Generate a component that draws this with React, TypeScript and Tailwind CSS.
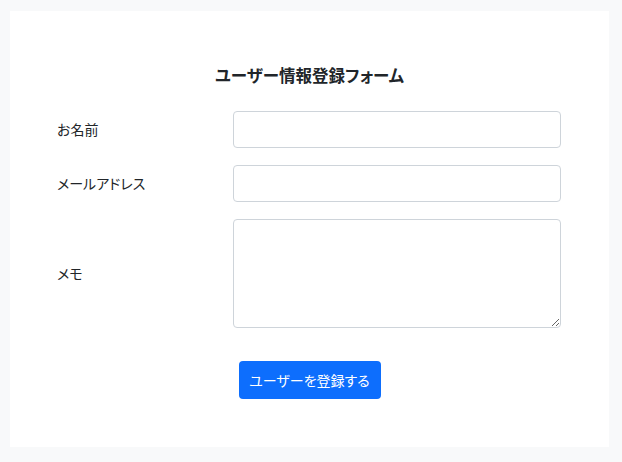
import { useState } from 'react'

const fields = [
  { id: 'name', label: 'お名前', type: 'text' },
  { id: 'email', label: 'メールアドレス', type: 'email' },
]

export default function App() {
  const [form, setForm] = useState({ name: '', email: '', memo: '' })

  return (
    <div
      className="min-h-[462px] w-full bg-[#f8f9fa] pt-[11px] pl-[10px] text-[#212529] [font-family:'Noto_Sans_CJK_JP','Noto_Sans',sans-serif] [font-feature-settings:'palt']"
    >
      <div className="w-[599px] h-[436px] bg-white px-[47px] pt-[50px]">
        <h1 className="text-center text-[16.5px] leading-[28px] font-bold mb-[22px]">
          ユーザー情報登録フォーム
        </h1>

        <form className="flex flex-col gap-[17px]" onSubmit={(e) => e.preventDefault()}>
          {fields.map((f) => (
            <div key={f.id} className="flex items-center">
              <label htmlFor={f.id} className="w-[176px] text-[14px]">
                {f.label}
              </label>
              <input
                id={f.id}
                type={f.type}
                value={form[f.id as 'name' | 'email']}
                onChange={(e) => setForm({ ...form, [f.id]: e.target.value })}
                className="w-[328px] h-[37px] rounded-[4px] border border-[#ced4da] px-3 text-[15px] outline-none"
              />
            </div>
          ))}

          <div className="flex items-center">
            <label htmlFor="memo" className="w-[176px] text-[14px]">
              メモ
            </label>
            <textarea
              id="memo"
              value={form.memo}
              onChange={(e) => setForm({ ...form, memo: e.target.value })}
              className="w-[328px] h-[109px] rounded-[4px] border border-[#ced4da] px-3 py-1.5 text-[15px] outline-none resize-y"
            />
          </div>

          <div className="flex justify-center mt-[16px]">
            <button
              type="submit"
              className="w-[142px] h-[38px] rounded-[4px] bg-[#0d6efd] text-white text-[14px]"
            >
              ユーザーを登録する
            </button>
          </div>
        </form>
      </div>
    </div>
  )
}
